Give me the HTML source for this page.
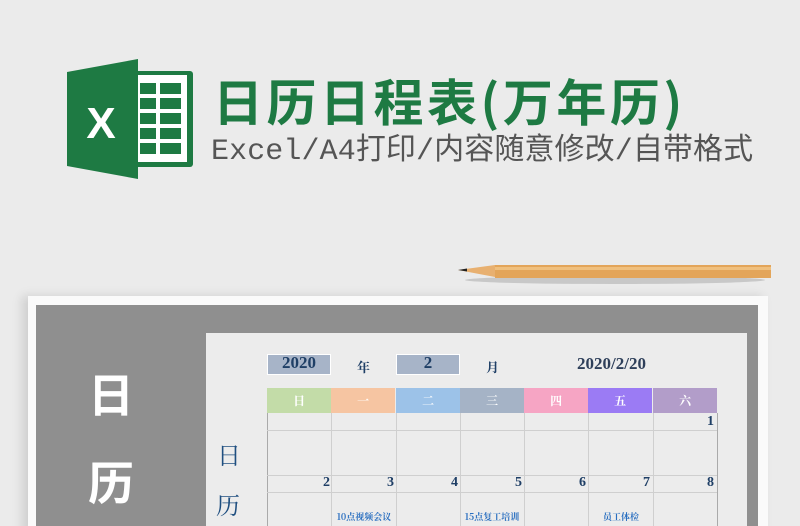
<!DOCTYPE html>
<html><head><meta charset="utf-8"><style>
*{margin:0;padding:0;box-sizing:border-box}
html,body{width:800px;height:526px;overflow:hidden}
body{background:#ebebeb;position:relative;font-family:"Liberation Sans","Noto Sans CJK SC",sans-serif}
.a{position:absolute}
.title{left:213px;top:66px;font-size:50px;font-weight:bold;color:#1e7a43;letter-spacing:3.5px;white-space:nowrap;font-family:"Noto Sans CJK SC",sans-serif;line-height:68px}
.sub{left:211px;top:133px;font-size:30px;color:#555;white-space:nowrap;font-family:"Liberation Mono","Noto Sans CJK SC",sans-serif;line-height:38px;letter-spacing:0.1px}
.paper{left:28px;top:296px;width:740px;height:240px;background:#fafafa;box-shadow:-6px 0 10px rgba(0,0,0,.12)}
.gray{left:36px;top:305px;width:722px;height:230px;background:#8f8f8f}
.big{color:#fff;font-size:46px;font-weight:bold;left:88px;font-family:"Noto Sans CJK SC",sans-serif}
.panel{left:206px;top:333px;width:541px;height:200px;background:#ececec}
.serif{font-family:"Liberation Serif","Noto Serif CJK SC",serif;font-weight:bold;color:#1f3f66}
.hd{top:388px;height:25px;width:64.3px;color:#fff;font-size:12px;text-align:center;line-height:25px;font-family:"Noto Serif CJK SC",serif;font-weight:bold}
.vl{top:413px;width:1px;height:120px;background:#cfcfcf}
.hl{left:267px;width:450px;height:1px;background:#cfcfcf}
.n{font-size:14px;width:60px;text-align:right}
.ev{font-size:9px;color:#2a6fc0;font-weight:bold;font-family:"Noto Serif CJK SC",serif;width:64px;text-align:center;top:510px}
</style></head><body>
<svg class="a" style="left:60px;top:55px" width="140" height="128" viewBox="60 55 140 128">
<rect x="132" y="71" width="61" height="96" rx="3" fill="#1e7a43"/>
<rect x="137" y="75" width="50" height="87" fill="#fff"/>
<g fill="#1e7a43">
<rect x="140" y="83" width="16" height="11"/><rect x="160" y="83" width="21" height="11"/>
<rect x="140" y="98" width="16" height="11"/><rect x="160" y="98" width="21" height="11"/>
<rect x="140" y="113" width="16" height="11"/><rect x="160" y="113" width="21" height="11"/>
<rect x="140" y="128" width="16" height="11"/><rect x="160" y="128" width="21" height="11"/>
<rect x="140" y="143" width="16" height="11"/><rect x="160" y="143" width="21" height="11"/>
</g>
<path d="M67 72 L138 59 L138 179 L67 166 Z" fill="#1e7a43"/>
<text x="101" y="138" font-family="Liberation Sans" font-weight="bold" font-size="44" fill="#fff" text-anchor="middle">X</text>
</svg>
<div class="a title">日历日程表(万年历)</div>
<div class="a sub">Excel/A4打印/内容随意修改/自带格式</div>
<svg class="a" style="left:455px;top:258px" width="320" height="30">
<ellipse cx="160" cy="22" rx="150" ry="4" fill="rgba(0,0,0,.15)"/>
<path d="M3 12 L40 7 L40 19 Z" fill="#e8b070"/>
<path d="M3 12 L12 10.5 L12 13.5 Z" fill="#222"/>
<rect x="40" y="7" width="276" height="13" fill="#e3a55a"/>
<rect x="40" y="9" width="276" height="3" fill="#f0c07e"/>
</svg>
<div class="a paper"></div>
<div class="a gray"></div>
<div class="a big" style="top:360px">日</div>
<div class="a big" style="top:448px">历</div>
<div class="a panel"></div>
<div class="a" style="left:267px;top:354px;width:64px;height:21px;background:#a7b4c8;border:1px solid #fff"></div>
<div class="a serif" style="left:267px;top:353px;width:64px;text-align:center;font-size:17px">2020</div>
<div class="a serif" style="left:357px;top:357px;font-size:13px">年</div>
<div class="a" style="left:396px;top:354px;width:64px;height:21px;background:#a7b4c8;border:1px solid #fff"></div>
<div class="a serif" style="left:396px;top:353px;width:64px;text-align:center;font-size:17px">2</div>
<div class="a serif" style="left:486px;top:357px;font-size:13px">月</div>
<div class="a serif" style="left:577px;top:354px;font-size:17px;color:#2e3f5a">2020/2/20</div>
<div class="a serif" style="left:217px;top:436px;font-size:24px;font-weight:normal;color:#1f4f80">日</div>
<div class="a serif" style="left:216px;top:486px;font-size:24px;font-weight:normal;color:#1f4f80">历</div>
<div class="a hd" style="left:267px;background:#c3dca8">日</div>
<div class="a hd" style="left:331px;background:#f6c5a2">一</div>
<div class="a hd" style="left:396px;background:#9cc2e8">二</div>
<div class="a hd" style="left:460px;background:#a5b3c6">三</div>
<div class="a hd" style="left:524px;background:#f6a5c4">四</div>
<div class="a hd" style="left:588px;background:#9b7bf4">五</div>
<div class="a hd" style="left:653px;background:#b29dc9">六</div>
<div class="a vl" style="left:267px;background:#aaa"></div>
<div class="a vl" style="left:331px"></div><div class="a vl" style="left:396px"></div>
<div class="a vl" style="left:460px"></div><div class="a vl" style="left:524px"></div>
<div class="a vl" style="left:588px"></div><div class="a vl" style="left:653px"></div>
<div class="a vl" style="left:717px;background:#aaa"></div>
<div class="a hl" style="top:430px"></div><div class="a hl" style="top:475px"></div><div class="a hl" style="top:492px"></div>
<div class="a serif n" style="left:654px;top:414px">1</div>
<div class="a serif n" style="left:270px;top:475px">2</div>
<div class="a serif n" style="left:334px;top:475px">3</div>
<div class="a serif n" style="left:398px;top:475px">4</div>
<div class="a serif n" style="left:462px;top:475px">5</div>
<div class="a serif n" style="left:526px;top:475px">6</div>
<div class="a serif n" style="left:590px;top:475px">7</div>
<div class="a serif n" style="left:654px;top:475px">8</div>
<div class="a ev" style="left:332px">10点视频会议</div>
<div class="a ev" style="left:460px">15点复工培训</div>
<div class="a ev" style="left:589px">员工体检</div>
</body></html>
